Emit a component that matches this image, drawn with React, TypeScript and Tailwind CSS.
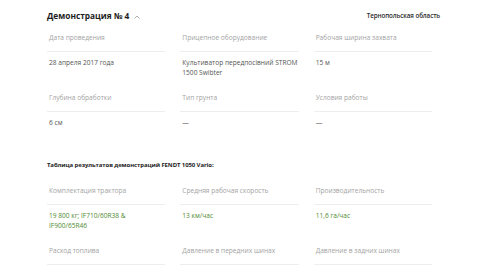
import React from "react";

type Cell = { label: string; value: React.ReactNode; green?: boolean };

function Grid({ rows }: { rows: Cell[][] }) {
  return (
    <div className="flex flex-col pr-[8px]">
      {rows.map((row, i) => (
        <div key={i} className="grid grid-cols-3 gap-x-[15px]">
          {row.map((c, j) => (
            <div key={j} className="flex flex-col">
              <div className="pl-[2px] pb-[8px] text-[6.6px] leading-[10px] text-[#a3a3a3] border-b border-[#eeeeee]">
                {c.label}
              </div>
              <div
                className={
                  "pl-[2px] pt-[6px] h-[41px] text-[6.6px] leading-[9.5px] " +
                  (c.green ? "text-[#4f8a2f]" : "text-[#555555]")
                }
              >
                {c.value}
              </div>
            </div>
          ))}
        </div>
      ))}
    </div>
  );
}

export default function App() {
  return (
    <div
      className="w-[480px] h-[270px] bg-white overflow-hidden pl-[47px] pr-[40px] pt-[9px]"
      style={{ fontFamily: '"Open Sans", "Liberation Sans", sans-serif' }}
    >
      <div className="flex items-center justify-between h-[14px]">
        <div className="flex items-center gap-[5px]">
          <span className="text-[8.3px] font-bold text-[#1e1e1e] leading-[14px]">Демонстрация № 4</span>
          <svg width="6" height="4" viewBox="0 0 6 4" className="mt-[1px]">
            <path d="M0.5 3.5 L3 1 L5.5 3.5" fill="none" stroke="#9a9a9a" strokeWidth="0.8" />
          </svg>
        </div>
        <span className="text-[6.3px] font-semibold text-[#2a2a2a] tracking-[-0.1px]">Тернопольская область</span>
      </div>
      <div className="mt-[10px]">
        <Grid
          rows={[
            [
              { label: "Дата проведения", value: "28 апреля 2017 года" },
              { label: "Прицепное оборудование", value: <>Культиватор передпосівний STROM<br />1500 Swibter</> },
              { label: "Рабочая ширина захвата", value: "15 м" },
            ],
            [
              { label: "Глубина обработки", value: "6 см" },
              { label: "Тип грунта", value: "—" },
              { label: "Условия работы", value: "—" },
            ],
          ]}
        />
      </div>
      <div className="mt-[7px] text-[6px] font-bold text-[#1e1e1e] leading-[10px] tracking-[-0.1px]">
        Таблица результатов демонстраций FENDT 1050 Vario:
      </div>
      <div className="mt-[16px]">
        <Grid
          rows={[
            [
              { label: "Комплектация трактора", value: <>19 800 кг; IF710/60R38 &amp;<br />IF900/65R46</>, green: true },
              { label: "Средняя рабочая скорость", value: "13 км/час", green: true },
              { label: "Производительность", value: "11,6 га/час", green: true },
            ],
            [
              { label: "Расход топлива", value: "" },
              { label: "Давление в передних шинах", value: "" },
              { label: "Давление в задних шинах", value: "" },
            ],
          ]}
        />
      </div>
    </div>
  );
}
